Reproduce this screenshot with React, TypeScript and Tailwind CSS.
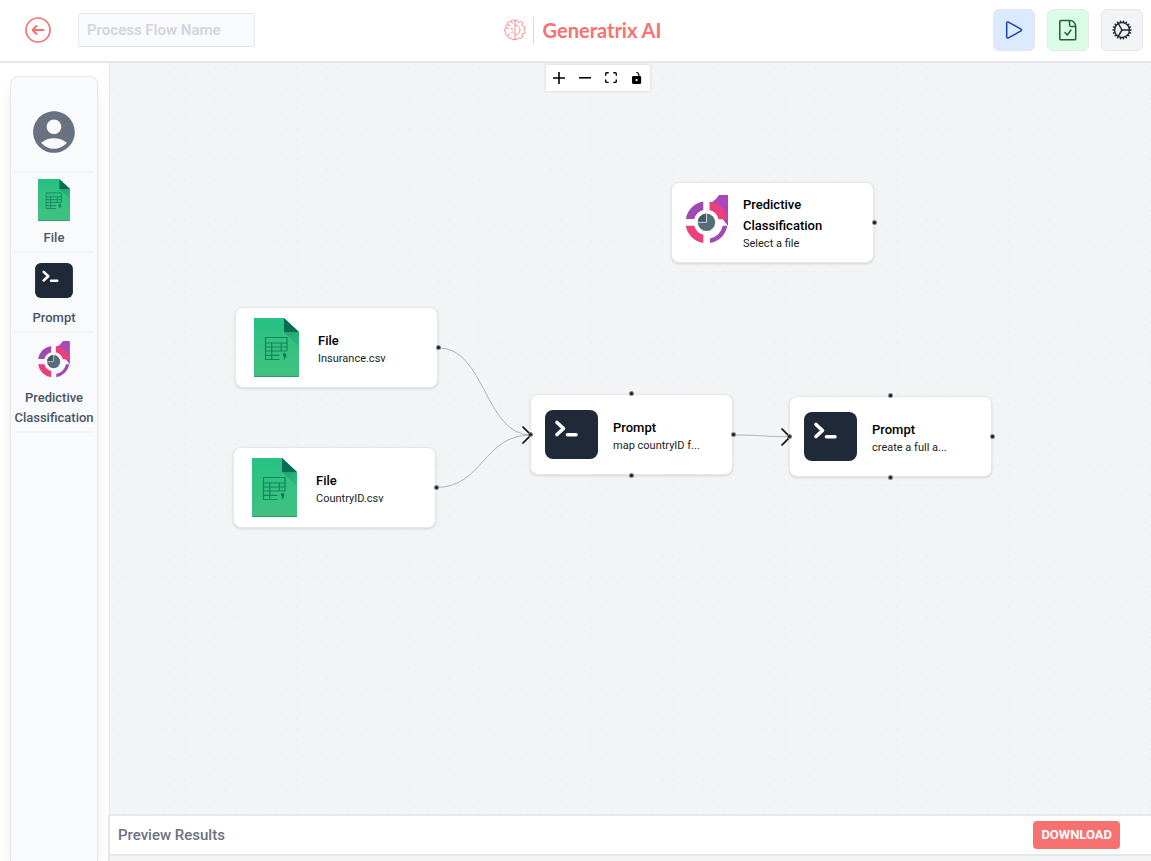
import { ReactNode } from "react";
import { MdAccountCircle } from "react-icons/md";
import { HiOutlineCog } from "react-icons/hi2";

function FileIcon({ className }: { className: string }) {
  return (
    <svg viewBox="0 0 45 59" className={className} aria-hidden="true">
      <defs>
        <linearGradient id="sheet" x1="0" y1="0" x2="0" y2="1">
          <stop offset="0" stopColor="#27c282" />
          <stop offset="1" stopColor="#41c17f" />
        </linearGradient>
        <linearGradient id="fold" x1="0" y1="0" x2="1" y2="1">
          <stop offset="0" stopColor="#138a5f" stopOpacity="0.55" />
          <stop offset="1" stopColor="#138a5f" stopOpacity="0.1" />
        </linearGradient>
      </defs>
      <path d="M0 0H30L45 14V59H0Z" fill="url(#sheet)" />
      <path d="M0 58.4H45" stroke="#2a9a67" strokeWidth="1" />
      <path d="M30 14H45V28Z" fill="url(#fold)" />
      <path d="M30 0L45 14H30Z" fill="#066e54" />
      <g fill="none" stroke="#12855f" strokeWidth="1.2">
        <path d="M33 33V19.5H11.5V41.5H25.5M11.5 25H33M11.5 29H33M11.5 33H33M11.5 37.3H25.5M17.7 25V41.5M27.2 25V33" />
      </g>
      <path d="M30.2 35a2.1 2.1 0 0 1 2.1 2.3c0 2-.9 3.4-2.6 4.2l-.4-.8c.8-.5 1.2-1 1.2-1.7a2.1 2.1 0 0 1-.3-4Z" fill="#0b7457" />
    </svg>
  );
}

function PromptIcon({ className }: { className: string }) {
  return (
    <svg viewBox="0 0 53 49" className={className} aria-hidden="true">
      <rect width="53" height="49" rx="8" fill="#1f2937" />
      <path d="M12 12.500L18.500 18.500L12 24.500" fill="none" stroke="#fff" strokeWidth="3.600" strokeLinecap="round" strokeLinejoin="round" />
      <path d="M22.500 24.800H31" stroke="#fff" strokeWidth="3.600" strokeLinecap="round" />
    </svg>
  );
}

function PredictiveIcon({ className }: { className: string }) {
  return (
    <svg viewBox="0 0 42 49" className={className} aria-hidden="true">
      <path d="M33 0H42V31L24 8Q29 6 33 0Z" fill="#ab47bc" />
      <path d="M17.300 6.500V15A12.700 12.700 0 0 0 8.300 24H-0.200A20.900 20.900 0 0 1 17.300 6.500Z" fill="#a04bb1" />
      <path d="M23.500 6.500A20.900 20.900 0 0 1 41.700 24.300H32.600A12.700 12.700 0 0 0 23.500 15Z" fill="#ec407a" />
      <path d="M17.300 48V39.800A12.700 12.700 0 0 1 8.300 30.800H-0.200A20.900 20.900 0 0 0 17.300 48Z" fill="#ec407a" />
      <path d="M24 48V43.500A17 17 0 0 0 36.800 30.800H41.300A20.900 20.900 0 0 1 24 48Z" fill="#a04bb1" />
      <circle cx="20.500" cy="27.300" r="8.700" fill="#546e7a" />
      <path d="M20.500 27.300V18.600A8.700 8.700 0 0 0 11.800 27.300Z" fill="#455a64" />
      <path d="M20.500 18.300V27.300H11.500" fill="none" stroke="#dfe6e9" strokeWidth="0.900" />
    </svg>
  );
}

function BrainLogo() {
  return (
    <svg viewBox="0 0 22 22" className="h-[22px] w-[22px]" fill="none" stroke="#f87171" strokeWidth="0.800" strokeLinecap="round" strokeLinejoin="round" aria-hidden="true">
      <path d="M11 1.500V20.500M11 2C9.800.3 7.500.6 6.900 2.300C5 1.900 3.300 3.400 3.700 5.200C1.800 5.700 1.300 7.700 2.200 8.900C.3 9.800.1 12.200 1.700 13.200C1.100 15 2.200 16.500 3.800 16.700C3.900 18.600 5.600 19.700 7.200 19.200C8 21.200 10 21.300 11 20.200" />
      <path d="M6.900 2.300C7 3.500 7.800 4 8.700 4M3.700 5.200C4 6.400 5 6.900 6 6.500M2.200 8.900C3 9.700 4.200 9.600 4.800 8.900M6.800 9.300C7.400 10.500 8.500 10.600 9.300 10M3.800 16.700C3.800 15.500 4.700 14.800 5.700 15M7.300 13.500C8 12.800 8.800 12.700 9.500 13.200" />
      <path d="M11 1.500L12.500 1L13.600 2.900L15.200 3.300L17 2.300L18.700 4L17.900 5.900L18.800 7.300L20.900 7.900V10L19.600 11L20.900 12.200V14L18.800 14.800L18 16.200L18.700 18L17 19.600L15.200 18.800L13.600 19.300L12.600 20.900L11 20.500" />
      <path d="M11 6A5 5 0 0 1 11 16" />
    </svg>
  );
}

function Dots() {
  return (
    <svg className="absolute inset-0 h-full w-full" aria-hidden="true">
      <defs>
        <pattern id="dots" width="10.170" height="10.170" x="3" y="4.500" patternUnits="userSpaceOnUse">
          <circle cx="0.600" cy="0.600" r="0.500" fill="#e0e2e5" />
        </pattern>
      </defs>
      <rect width="100%" height="100%" fill="url(#dots)" />
    </svg>
  );
}

function Edges() {
  return (
    <svg className="absolute inset-0 h-full w-full" fill="none" aria-hidden="true">
      <g stroke="#b1b1b7" strokeWidth="1">
        <path d="M329 285C375 285 375 372 421 372" />
        <path d="M326 424.500C373 424.500 373 372 421 372" />
        <path d="M624 372C652 372 652 373.700 680 373.700" />
      </g>
      <g stroke="#000" strokeWidth="1.700" strokeLinecap="round" strokeLinejoin="round">
        <path d="M413 364L421 372L413 380" />
        <path d="M672 366L680 374L672 382" />
      </g>
    </svg>
  );
}

const handle = "absolute h-[5px] w-[5px] rounded-full border border-gray-100/50 bg-[#1a192b] bg-clip-border";

type NodeProps = {
  place: string;
  icon: ReactNode;
  title: string;
  detail: string;
  left?: boolean;
  vertical?: boolean;
};

function FlowNode({ place, icon, title, detail, left, vertical }: NodeProps) {
  return (
    <div className={`absolute flex h-[81px] w-[203px] items-center gap-[15px] rounded-lg border border-gray-200 bg-white px-[14px] shadow-sm ${place}`}>
      {icon}
      <div className="w-[100px]">
        <h3 className="text-[13px] font-medium leading-[21px] text-black">{title}</h3>
        <p className="truncate text-[11px] leading-[15px] text-[#222]">{detail}</p>
      </div>
      {left && <span className={`${handle} -left-[3px] top-[37px]`} />}
      <span className={`${handle} -right-[4px] top-[37px]`} />
      {vertical && <span className={`${handle} -top-[4px] left-[98px]`} />}
      {vertical && <span className={`${handle} -bottom-[4px] left-[98px]`} />}
    </div>
  );
}

function PaletteItem({ icon, label }: { icon: ReactNode; label: string }) {
  return (
    <li className="flex flex-col items-center border-b-2 border-gray-100 pb-[3px] pt-[5px] text-center">
      <div className="flex h-[44px] items-center">{icon}</div>
      <span className="mt-[6px] text-[13px] font-medium leading-5 text-gray-600">{label}</span>
    </li>
  );
}

const squareButton = "flex h-[42px] w-[42px] items-center justify-center rounded-md border border-gray-200";
const controlButton = "flex h-[26px] w-[26px] items-center justify-center";

export default function App() {
  return (
    <div className="flex h-screen flex-col overflow-hidden bg-white font-[Roboto,sans-serif]">
      <header className="flex h-[63px] shrink-0 items-center border-b-2 border-gray-200 pb-px pl-[21px] pr-2">
        <div className="flex flex-1 items-center gap-[24px] pl-px">
          <button type="button" aria-label="Back" className="flex h-8 w-8 items-center justify-center">
            <svg viewBox="0 0 26 26" className="h-[26px] w-[26px]" fill="none" stroke="#f87171" strokeLinecap="round" strokeLinejoin="round">
              <circle cx="13" cy="13" r="12" strokeWidth="1.700" />
              <path d="M18.500 13H8M11.500 9L7.500 13L11.500 17" strokeWidth="2" />
            </svg>
          </button>
          <input
            type="text"
            aria-label="Process Flow Name"
            placeholder="Process Flow Name"
            className="h-[34px] w-[177px] rounded-xs border border-gray-200 bg-gray-50 px-2 text-[15px] font-semibold text-gray-700 outline-none placeholder:text-gray-300"
          />
        </div>
        <div className="flex items-center">
          <BrainLogo />
          <span className="ml-[7px] h-[27px] w-px bg-red-200" />
          <h1 className="ml-[9px] font-[Lato,sans-serif] text-[20px] font-bold leading-7 text-[#f87171]">Generatrix AI</h1>
        </div>
        <div className="flex flex-1 justify-end gap-3">
          <button type="button" aria-label="Run" className={`${squareButton} bg-blue-100`}>
            <svg viewBox="0 0 24 24" className="h-6 w-6" fill="none" stroke="#1e40af" strokeWidth="1.500" strokeLinejoin="round">
              <path d="M4.700 5v14c0 .9.900 1.300 1.700.900l12.600-7c.800-.500.800-1.300 0-1.800l-12.600-7c-.8-.4-1.700 0-1.700.900Z" />
            </svg>
          </button>
          <button type="button" aria-label="Validate" className={`${squareButton} bg-green-100`}>
            <svg viewBox="0 0 24 24" className="h-6 w-6" fill="none" stroke="#166534" strokeWidth="1.500" strokeLinecap="round" strokeLinejoin="round">
              <path d="M14 2.500H5a1.200 1.200 0 0 0-1.200 1.200V20.600a1.200 1.200 0 0 0 1.200 1.200h13.500a1.200 1.200 0 0 0 1.200-1.200V8.500C19.700 5 17 2.500 14 2.500Z" />
              <path d="M13.500 2.800V7a1.400 1.400 0 0 0 1.400 1.400H19.200M9 14.500L11.300 17L15 12" />
            </svg>
          </button>
          <button type="button" aria-label="Settings" className={`${squareButton} bg-gray-100 text-gray-800`}>
            <HiOutlineCog className="h-6 w-6" />
          </button>
        </div>
      </header>

      <div className="flex min-h-0 flex-1">
        <aside className="flex w-[108px] shrink-0 overflow-hidden pl-[10px] pr-[10px] pt-[13px]">
          <div className="flex-1 rounded-t-lg border border-b-0 border-gray-200 bg-gray-50 px-[3px] shadow-lg">
            <div className="flex h-[96px] items-center justify-center border-b-2 border-gray-100 pt-4 text-gray-500">
              <MdAccountCircle className="h-[50px] w-[50px]" />
            </div>
            <ul>
              <PaletteItem icon={<FileIcon className="h-[42px] w-[32px]" />} label="File" />
              <PaletteItem icon={<PromptIcon className="h-[35px] w-[38px]" />} label="Prompt" />
              <PaletteItem icon={<PredictiveIcon className="mb-[2px] h-[37px] w-[32px]" />} label="Predictive Classification" />
            </ul>
          </div>
        </aside>

        <main className="flex min-w-0 flex-1 flex-col">
          <section aria-label="Flow canvas" className="relative ml-px min-h-0 flex-1 overflow-hidden border-l border-gray-200 bg-gray-100">
            <Dots />
            <Edges />
            <div className="absolute left-[436px] top-[2px] flex bg-white shadow-[0_0_2px_1px_rgba(0,0,0,0.08)]">
              <button type="button" aria-label="Zoom in" className={controlButton}>
                <svg viewBox="0 0 32 32" className="w-3">
                  <path d="M32 18.133H18.133V32h-4.266V18.133H0v-4.266h13.867V0h4.266v13.867H32z" />
                </svg>
              </button>
              <button type="button" aria-label="Zoom out" className={controlButton}>
                <svg viewBox="0 0 32 5" className="w-3">
                  <path d="M0 0h32v4.200H0z" />
                </svg>
              </button>
              <button type="button" aria-label="Fit view" className={controlButton}>
                <svg viewBox="0 0 32 30" className="w-3">
                  <path d="M3.692 4.630c0-.53.4-.938.939-.938h5.215V0H4.708C2.130 0 0 2.054 0 4.630v5.216h3.692V4.631zM27.354 0h-5.200v3.692h5.170c.530 0 .984.4.984.939v5.215H32V4.631A4.624 4.624 0 0027.354 0zm.954 24.830c0 .532-.4.940-.939.940h-5.215v3.768h5.215c2.577 0 4.631-2.130 4.631-4.707v-5.139h-3.692v5.139zm-23.677.940c-.531 0-.939-.4-.939-.940v-5.138H0v5.139c0 2.577 2.130 4.707 4.708 4.707h5.138V25.770H4.631z" />
                </svg>
              </button>
              <button type="button" aria-label="Toggle lock" className={controlButton}>
                <svg viewBox="0 0 25 32" className="h-3">
                  <path d="M21.333 10.667H19.810V7.619C19.810 3.429 16.380 0 12.190 0c-4.114 1.828-1.370 2.133.305 2.438 1.676.305 4.420 2.590 4.420 5.181v3.048H3.047A3.056 3.056 0 000 13.714v15.238A3.056 3.056 0 003.048 32h18.285a3.056 3.056 0 003.048-3.048V13.714a3.056 3.056 0 00-3.048-3.047zM12.190 24.533a3.056 3.056 0 01-3.047-3.047 3.056 3.056 0 013.047-3.048 3.056 3.056 0 013.048 3.048 3.056 3.056 0 01-3.048 3.047z" />
                </svg>
              </button>
            </div>

            <FlowNode
              place="left-[561px] top-[119px]"
              icon={<PredictiveIcon className="mb-[6px] h-[49px] w-[42px] shrink-0" />}
              title="Predictive Classification"
              detail="Select a file"
            />
            <FlowNode
              place="left-[125px] top-[244px]"
              icon={<FileIcon className="h-[59px] w-[53px] shrink-0" />}
              title="File"
              detail="Insurance.csv"
            />
            <FlowNode
              place="left-[123px] top-[384px]"
              icon={<FileIcon className="h-[59px] w-[53px] shrink-0" />}
              title="File"
              detail="CountryID.csv"
            />
            <FlowNode
              place="left-[420px] top-[331px]"
              icon={<PromptIcon className="h-[49px] w-[53px] shrink-0" />}
              title="Prompt"
              detail="map countryID f..."
              left
              vertical
            />
            <FlowNode
              place="left-[679px] top-[333px]"
              icon={<PromptIcon className="h-[49px] w-[53px] shrink-0" />}
              title="Prompt"
              detail="create a full a..."
              left
              vertical
            />
          </section>
          <section className="shrink-0 border-l-2 border-t-2 border-gray-200 bg-gray-100 pb-[5px]">
            <div className="flex h-10 items-center justify-between border-b-2 border-gray-200 bg-white pl-2 pr-[31px]">
              <h2 className="text-[15px] font-medium leading-6 text-gray-500">Preview Results</h2>
              <button type="button" className="h-7 rounded-sm bg-[#f87171] px-2 text-[13px] font-bold leading-5 text-white">
                DOWNLOAD
              </button>
            </div>
          </section>
        </main>
      </div>
    </div>
  );
}
